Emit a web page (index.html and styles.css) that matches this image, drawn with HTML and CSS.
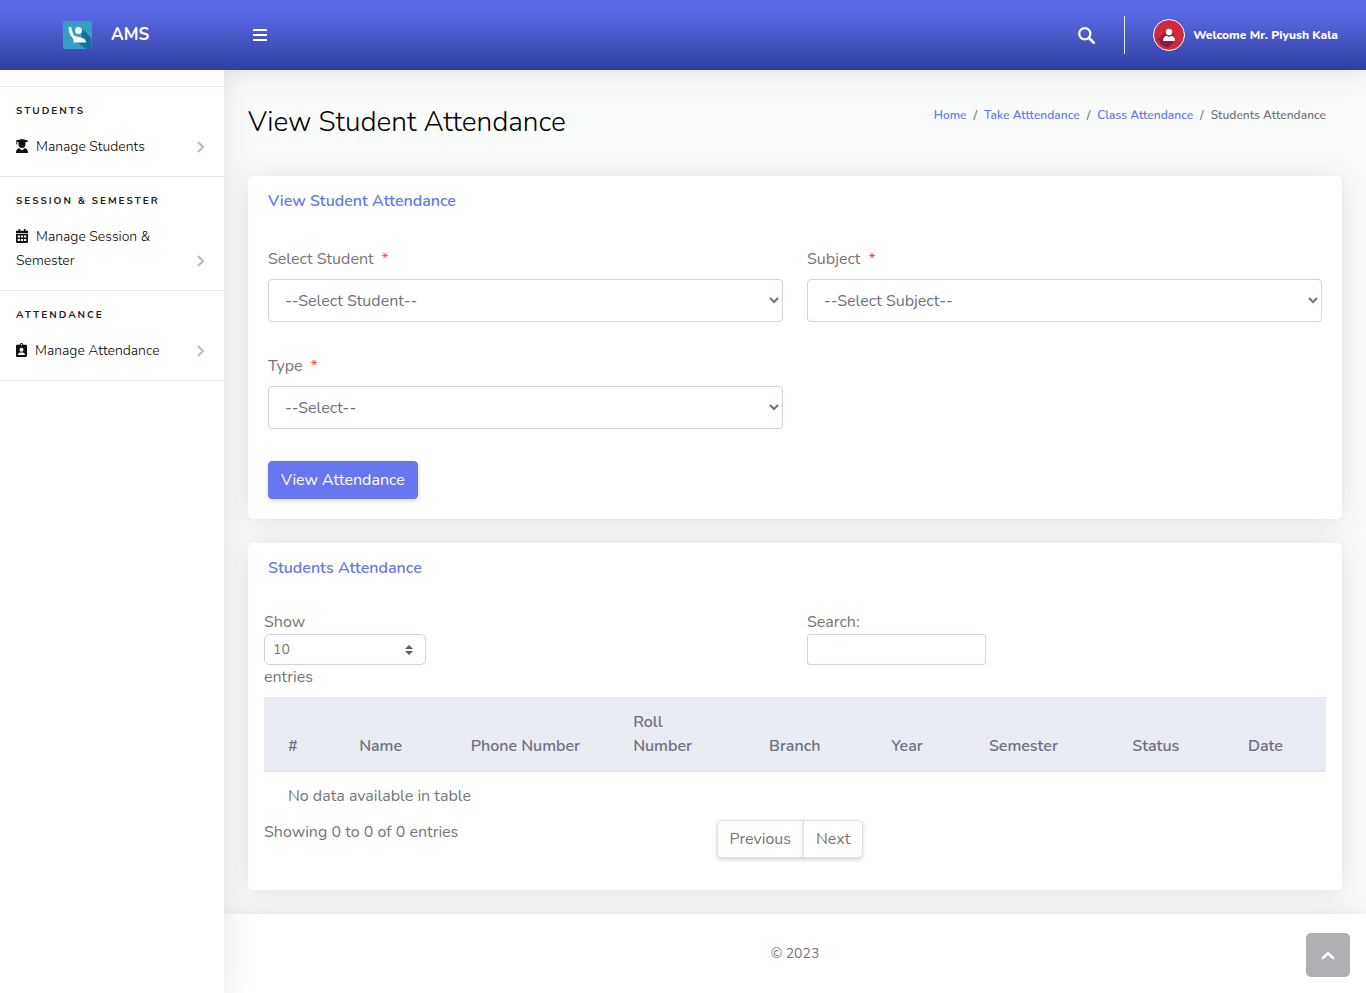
FILE: index.html
```html
<!DOCTYPE html>
<html lang="en">
<head>
<meta charset="utf-8">
<meta name="viewport" content="width=device-width, initial-scale=1">
<title>AMS - View Student Attendance</title>
<link rel="stylesheet" href="styles.css">
</head>
<body>
<header class="topbar">
  <a class="brand" href="#">
    <svg class="brand-logo" viewBox="0 0 30 30" aria-hidden="true">
      <rect x="1" y="1" width="29" height="28" rx="1.500" fill="#349fc2"/>
      <path d="M18 7 29.500 18V29H24L15 22 20 18Z" fill="#176f9f"/>
      <circle cx="16.500" cy="10.500" r="3.500" fill="#fff"/>
      <path d="M6.500 7q2.500-1 3 1l1.500 6q1 2 3.500 2.500l6 1.500q3.500 1 3.500 4.500H12l-1-4Q7 15 6.500 7Z" fill="#fff"/>
    </svg>
    <span>AMS</span>
  </a>
  <button class="icon-button menu-button" type="button" aria-label="Toggle sidebar">
    <svg viewBox="0 0 14 12" width="14" height="12" aria-hidden="true"><path d="M0 1h14M0 6h14M0 11h14" stroke="#fff" stroke-width="2"/></svg>
  </button>
  <div class="topbar-tools">
    <button class="icon-button" type="button" aria-label="Search">
      <svg viewBox="0 0 17 17" width="17" height="17" aria-hidden="true"><circle cx="6.800" cy="6.800" r="5.600" fill="none" stroke="#fff" stroke-width="2.200"/><path d="m11 11 5 5" stroke="#fff" stroke-width="2.600" stroke-linecap="round"/></svg>
    </button>
    <a class="user" href="#">
      <svg viewBox="0 0 32 32" width="32" height="32" aria-hidden="true">
        <circle cx="16" cy="16" r="15.500" fill="#d02942" stroke="#fff"/>
        <path d="M13 12 5 20q3 8 10 9l7-7-2-8Z" fill="#8f1d35"/>
        <circle cx="16" cy="13" r="3.200" fill="#fff"/>
        <path d="M10 22q0-5 4-5l2 1 2-1q4 0 4 5Z" fill="#fff"/>
      </svg>
      <span>Welcome Mr. Piyush Kala</span>
    </a>
  </div>
</header>
<div class="shell">
  <nav class="sidebar" aria-label="Main">
    <section class="nav-group">
      <h2>Students</h2>
      <a href="#"><span class="nav-label"><svg viewBox="0 0 12 14" width="12" height="14" aria-hidden="true"><path d="M0 1.500 6 0l6 1.500v1L9.500 3.200V5q0 4-3.500 4T2.500 5V3.200L1.200 2.800V5.500H.3V2.500ZM0 14q0-4.500 3.500-4.700L6 11.500l2.500-2.200Q12 9.500 12 14Z"/></svg>Manage Students</span><svg class="chevron" viewBox="0 0 8 12" width="8" height="12" aria-hidden="true"><path d="m1 1 5 5-5 5"/></svg></a>
    </section>
    <section class="nav-group">
      <h2>Session &amp; Semester</h2>
      <a href="#"><span class="nav-label"><svg viewBox="0 0 12 14" width="12" height="14" aria-hidden="true"><path fill-rule="evenodd" d="M2.500 0h1.600v1.700h3.800V0h1.600v1.700H12v2.600H0V1.700h2.500ZM0 5h12v8q0 1-1 1H1q-1 0-1-1Zm1.700 1.500v2H4v-2Zm3.200 0v2h2.200v-2Zm3.200 0v2h2.200v-2Zm-6.400 3.500v2H4v-2Zm3.200 0v2h2.200v-2Zm3.200 0v2h2.200v-2Z"/></svg>Manage Session &amp; Semester</span><svg class="chevron" viewBox="0 0 8 12" width="8" height="12" aria-hidden="true"><path d="m1 1 5 5-5 5"/></svg></a>
    </section>
    <section class="nav-group">
      <h2>Attendance</h2>
      <a href="#"><span class="nav-label"><svg viewBox="0 0 11 14" width="11" height="14" aria-hidden="true"><path fill-rule="evenodd" d="M1 1.700h2.700q0-1.700 1.800-1.700t1.800 1.700H10q1 0 1 1V13q0 1-1 1H1q-1 0-1-1V2.700q0-1 1-1Zm4.500-.6a.7.700 0 1 0 0 1.400.7.700 0 0 0 0-1.400Zm0 3.600a2 2 0 1 0 0 4 2 2 0 0 0 0-4ZM2 12h7q0-2.600-2.200-2.600H4.200Q2 9.400 2 12Z"/></svg>Manage Attendance</span><svg class="chevron" viewBox="0 0 8 12" width="8" height="12" aria-hidden="true"><path d="m1 1 5 5-5 5"/></svg></a>
    </section>
  </nav>
  <div class="content">
    <main>
      <div class="page-head">
        <h1>View Student Attendance</h1>
        <ol class="breadcrumb">
          <li><a href="#">Home</a></li>
          <li><a href="#">Take Atttendance</a></li>
          <li><a href="#">Class Attendance</a></li>
          <li aria-current="page">Students Attendance</li>
        </ol>
      </div>
      <section class="card">
        <h2 class="card-title">View Student Attendance</h2>
        <form class="attendance-form">
          <div class="field">
            <label for="student">Select Student<span class="required">*</span></label>
            <select id="student"><option>--Select Student--</option></select>
          </div>
          <div class="field">
            <label for="subject">Subject<span class="required">*</span></label>
            <select id="subject"><option>--Select Subject--</option></select>
          </div>
          <div class="field">
            <label for="type">Type<span class="required">*</span></label>
            <select id="type"><option>--Select--</option></select>
          </div>
          <button class="primary" type="button">View Attendance</button>
        </form>
      </section>
      <section class="card">
        <h2 class="card-title">Students Attendance</h2>
        <div class="table-area">
          <div class="table-tools">
            <label class="stacked">Show <select class="length"><option>10</option><option>25</option><option>50</option></select> entries</label>
            <label class="stacked">Search: <input class="search" type="search"></label>
          </div>
          <table>
            <colgroup><col class="c-index"><col class="c-name"><col class="c-phone"><col class="c-roll"><col class="c-branch"><col class="c-year"><col class="c-semester"><col class="c-status"><col class="c-date"></colgroup>
            <thead><tr><th>#</th><th>Name</th><th>Phone Number</th><th>Roll Number</th><th>Branch</th><th>Year</th><th>Semester</th><th>Status</th><th>Date</th></tr></thead>
            <tbody><tr><td colspan="9">No data available in table</td></tr></tbody>
          </table>
          <div class="table-foot">
            <p>Showing 0 to 0 of 0 entries</p>
            <div class="pager"><button type="button">Previous</button><button type="button">Next</button></div>
          </div>
        </div>
      </section>
    </main>
    <footer>© 2023</footer>
  </div>
</div>
<a class="to-top" href="#" aria-label="Back to top"><svg viewBox="0 0 14 10" width="14" height="10" aria-hidden="true"><path d="m2 8 5-5 5 5" fill="none" stroke="#fff" stroke-width="2.600" stroke-linecap="round"/></svg></a>
</body>
</html>
```

FILE: styles.css
```css
* { box-sizing: border-box; }

body {
  margin: 0;
  min-height: 100vh;
  display: flex;
  flex-direction: column;
  background: #fafcfb;
  color: #757575;
  font: 16px/24px Nunito, "Open Sans", sans-serif;
}

h1, h2, p, ol { margin: 0; padding: 0; }
a { color: inherit; text-decoration: none; }
button, input, select { font: inherit; color: inherit; }

.topbar {
  height: 70px;
  display: flex;
  align-items: center;
  background: linear-gradient(#5b6be8 15%, #303f9f);
  color: #fff;
  box-shadow: 0 2px 28px rgba(58, 59, 69, 0.15);
}
.brand {
  width: 224px;
  display: flex;
  align-items: center;
  padding-left: 62px;
  gap: 19px;
  font-size: 17px;
  font-weight: 700;
}
.brand-logo { width: 30px; height: 30px; }
.icon-button {
  display: flex;
  padding: 4px;
  border: 0;
  background: none;
  cursor: pointer;
}
.menu-button { margin-left: 25px; }
.topbar-tools {
  margin-left: auto;
  padding-right: 28px;
  display: flex;
  align-items: center;
  gap: 25px;
}
.user {
  display: flex;
  align-items: center;
  gap: 8px;
  height: 38px;
  padding-left: 28px;
  border-left: 1px solid #e3e6f0;
  font-size: 12px;
  font-weight: 800;
}

.shell { flex: 1; display: flex; }
.sidebar {
  position: relative;
  flex: 0 0 224px;
  padding-top: 16px;
  background: #fff;
  box-shadow: 0 2px 28px rgba(58, 59, 69, 0.15);
  clip-path: inset(0 -42px 0 0);
}
.nav-group {
  padding: 16px 16px 17px;
  border-top: 1px solid #e3e6f0;
}
.nav-group:last-child { border-bottom: 1px solid #e3e6f0; }
.nav-group h2 {
  color: #212121;
  font-size: 10px;
  line-height: 16px;
  font-weight: 700;
  letter-spacing: 2px;
  text-transform: uppercase;
}
.nav-group a {
  display: flex;
  align-items: flex-end;
  justify-content: space-between;
  padding-top: 16px;
  color: #000;
  font-size: 14px;
  font-weight: 300;
}
.nav-label { max-width: 150px; }
.nav-label svg {
  margin-right: 8px;
  vertical-align: -2px;
  fill: #111;
}
.chevron {
  margin: 0 3px 6px 0;
  fill: none;
  stroke: #b7b9cc;
  stroke-width: 2;
}

.content {
  flex: 1;
  min-width: 0;
  display: flex;
  flex-direction: column;
}
main { flex: 1; padding: 34px 24px 0; }
.page-head {
  display: flex;
  justify-content: space-between;
  align-items: flex-start;
  margin-bottom: 36px;
  padding-right: 16px;
}
.page-head h1 {
  color: #000;
  font-size: 28px;
  line-height: 36px;
  font-weight: 300;
}
.breadcrumb {
  display: flex;
  list-style: none;
  font-size: 12px;
  line-height: 22px;
  font-weight: 600;
}
.breadcrumb li + li::before { content: "/"; padding: 0 7px; }
.breadcrumb a { color: #6777ef; }

.card {
  margin-bottom: 24px;
  border-radius: 5px;
  background: #fff;
  box-shadow: 0 2px 28px rgba(58, 59, 69, 0.15);
}
.card-title {
  padding: 13px 20px 11px;
  color: #6777ef;
  font-size: 16px;
  line-height: 24px;
  font-weight: 600;
}
.attendance-form {
  display: grid;
  grid-template-columns: 1fr 1fr;
  gap: 32px 24px;
  padding: 23px 20px 20px;
}
.field { display: grid; gap: 8px; }
.required { margin-left: 8px; color: #fc544b; }
.field select {
  width: 100%;
  height: 43px;
  padding: 0 0 0 12px;
  border: 1px solid #d1d3e2;
  border-radius: 4px;
  background: #fff;
  color: #6e707e;
}
.primary {
  grid-column: 1 / -1;
  justify-self: start;
  padding: 6px 12px;
  border: 1px solid #6777ef;
  border-radius: 4px;
  background: #6777ef;
  color: #fff;
  box-shadow: 0 2px 4px rgba(58, 59, 69, 0.2);
}

.table-area { padding: 19px 16px 32px; }
.table-tools {
  display: grid;
  grid-template-columns: 1fr 1fr;
  align-items: start;
  gap: 24px;
  margin-bottom: 8px;
}
.stacked { display: grid; justify-items: start; }
.length {
  width: 162px;
  height: 31px;
  padding: 0 8px;
  appearance: none;
  border: 1px solid #d1d3e2;
  border-radius: 5px;
  background: url("data:image/svg+xml,%3Csvg xmlns='http://www.w3.org/2000/svg' viewBox='0 0 4 5'%3E%3Cpath fill='%235a5c69' d='M2 0 0 2h4zm0 5L0 3h4z'/%3E%3C/svg%3E") right 12px center / 8px 10px no-repeat #fff;
  font-size: 14px;
}
.search {
  width: 179px;
  height: 31px;
  padding: 4px 8px;
  border: 1px solid #d1d3e2;
  border-radius: 3px;
  font-size: 14px;
}
table {
  width: 100%;
  table-layout: fixed;
  border-collapse: separate;
  border-spacing: 0;
}
.c-index { width: 6.7%; }
.c-name { width: 10.5%; }
.c-phone { width: 15.3%; }
.c-roll { width: 12.8%; }
.c-branch { width: 11.5%; }
.c-year { width: 9.2%; }
.c-semester { width: 13.5%; }
.c-status { width: 10.9%; }
.c-date { width: 9.6%; }
th, td { padding: 12px 24px; text-align: left; }
th {
  border-top: 1px solid #e3e6f0;
  border-bottom: 2px solid #e3e6f0;
  background: #eaecf4;
  color: #6e707e;
  font-weight: 600;
  vertical-align: bottom;
}
.table-foot {
  display: grid;
  grid-template-columns: repeat(12, 1fr);
  column-gap: 24px;
}
.table-foot p { grid-column: span 5; }
.pager { grid-column: span 7; display: flex; }
.pager button {
  padding: 6px 12px;
  border: 1px solid #dddfeb;
  background: #fff;
  box-shadow: 0 2px 4px rgba(58, 59, 69, 0.2);
}
.pager button:first-child { border-radius: 5px 0 0 5px; }
.pager button:last-child { margin-left: -1px; border-radius: 0 5px 5px 0; }

footer {
  padding: 28px 24px 27px;
  background: #fff;
  font-size: 14px;
  text-align: center;
  box-shadow: 0 2px 28px rgba(58, 59, 69, 0.15);
}
.to-top {
  position: fixed;
  right: 16px;
  bottom: 16px;
  width: 44px;
  height: 44px;
  display: grid;
  place-items: center;
  border-radius: 5px;
  background: #b0afb4;
}
```
